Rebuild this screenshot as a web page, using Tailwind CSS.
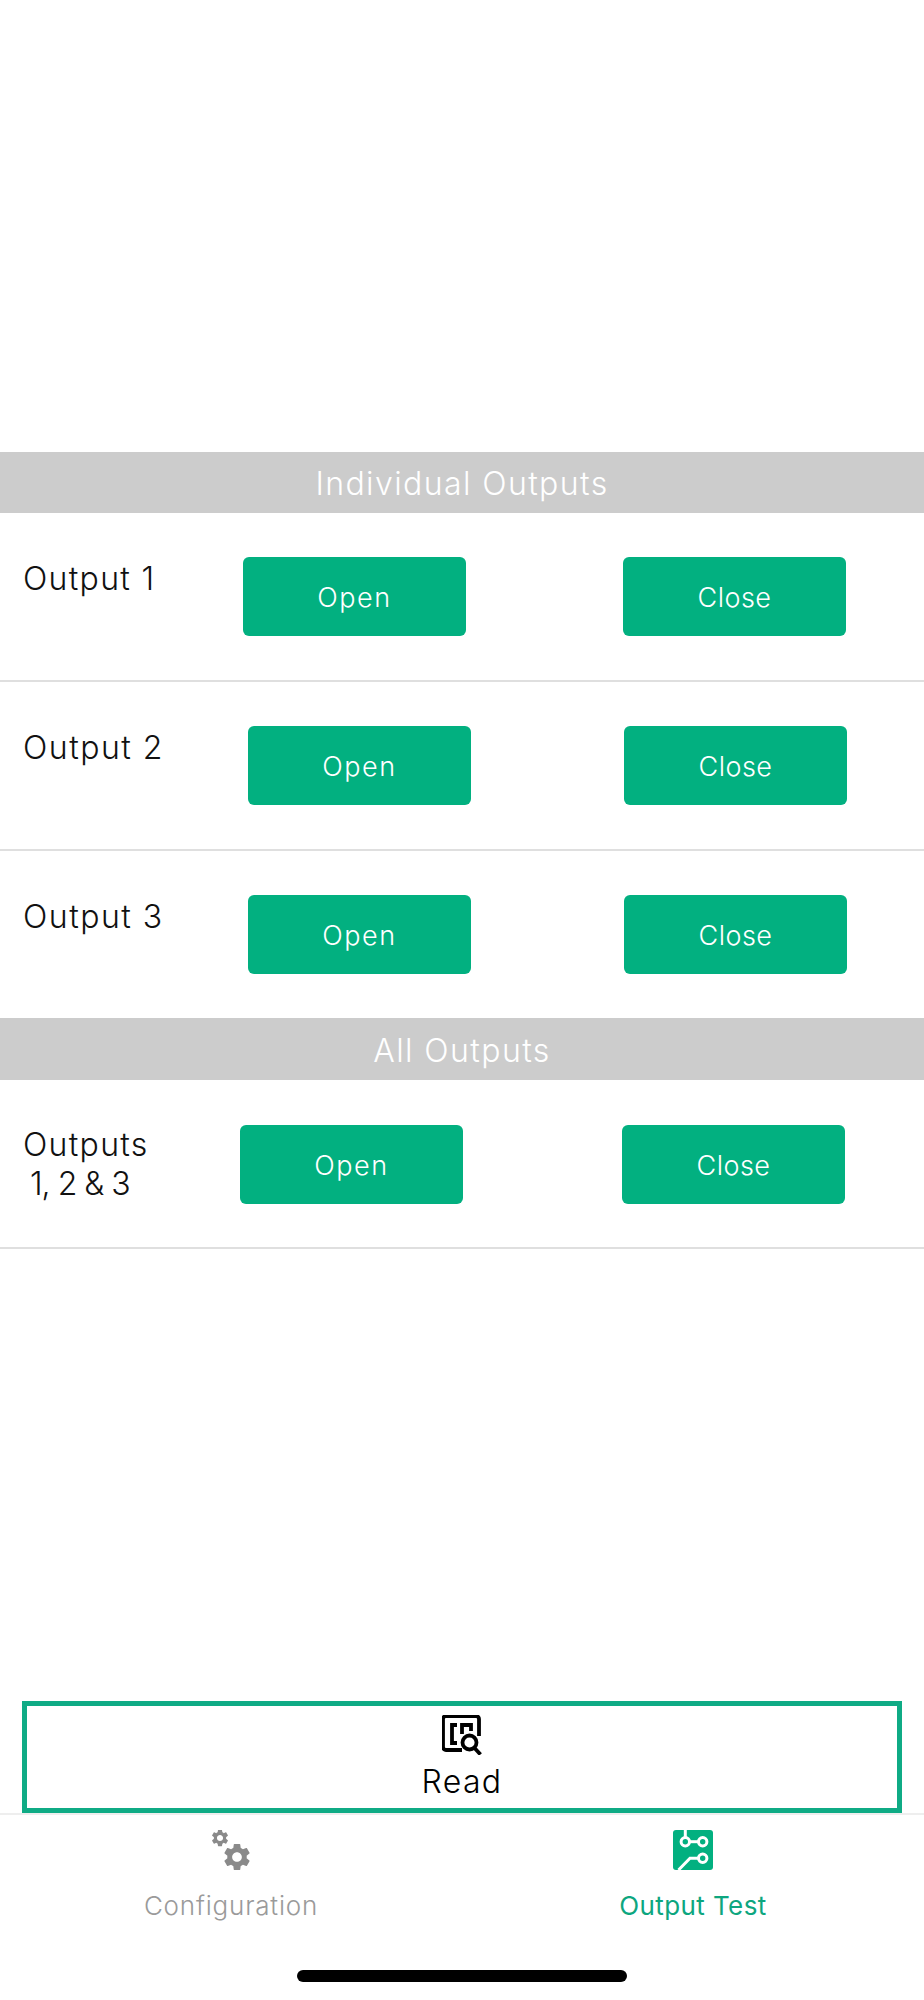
<!DOCTYPE html>
<html lang="en">
<head>
    <meta charset="UTF-8">
    <meta name="viewport" content="width=device-width, initial-scale=1.0">
    <title>Output Test</title>
    <script src="https://cdn.jsdelivr.net/npm/@tailwindcss/browser@4"></script>
</head>
<body class="bg-white">
<div class="flex flex-col w-[924px] h-[2000px] font-['Inter',sans-serif] font-light text-[#111]">
    <div class="h-[452px]"></div>

    <!-- Individual outputs -->
    <div class="h-[61px] pt-[2px] flex items-center justify-center bg-[#cccccc] text-white text-[32px] tracking-[1.4px]">Individual Outputs</div>

    <div class="h-[169px] pt-[44px] pl-[23px] flex items-start border-b-2 border-[#dfdfdf]">
        <div class="w-[220px] mt-[2px] text-[32px] leading-[40px] tracking-[1.3px]">Output 1</div>
        <button class="w-[223px] h-[79px] pt-[3px] rounded-[6px] bg-[#02b080] text-white text-[27px] tracking-[1.500px]">Open</button>
        <button class="w-[223px] h-[79px] pt-[3px] ml-[157px] rounded-[6px] bg-[#02b080] text-white text-[27px] tracking-[0.500px]">Close</button>
    </div>
    <div class="h-[169px] pt-[44px] pl-[23px] flex items-start border-b-2 border-[#dfdfdf]">
        <div class="w-[225px] mt-[2px] text-[32px] leading-[40px] tracking-[1.500px]">Output 2</div>
        <button class="w-[223px] h-[79px] pt-[3px] rounded-[6px] bg-[#02b080] text-white text-[27px] tracking-[1.500px]">Open</button>
        <button class="w-[223px] h-[79px] pt-[3px] ml-[153px] rounded-[6px] bg-[#02b080] text-white text-[27px] tracking-[0.500px]">Close</button>
    </div>
    <div class="h-[167px] pt-[44px] pl-[23px] flex items-start">
        <div class="w-[225px] mt-[2px] text-[32px] leading-[40px] tracking-[1.500px]">Output 3</div>
        <button class="w-[223px] h-[79px] pt-[3px] rounded-[6px] bg-[#02b080] text-white text-[27px] tracking-[1.500px]">Open</button>
        <button class="w-[223px] h-[79px] pt-[3px] ml-[153px] rounded-[6px] bg-[#02b080] text-white text-[27px] tracking-[0.500px]">Close</button>
    </div>

    <!-- All outputs -->
    <div class="h-[62px] pt-[3px] flex items-center justify-center bg-[#cccccc] text-white text-[32px] tracking-[1.4px]">All Outputs</div>

    <div class="h-[169px] pt-[45px] pl-[23px] flex items-start border-b-2 border-[#dfdfdf]">
        <div class="w-[217px] text-[32px] leading-[39px] tracking-[1.3px]">Outputs<span class="block pl-[7px] tracking-[-1px]">1, 2 &amp; 3</span></div>
        <button class="w-[223px] h-[79px] pt-[3px] rounded-[6px] bg-[#02b080] text-white text-[27px] tracking-[1.500px]">Open</button>
        <button class="w-[223px] h-[79px] pt-[3px] ml-[159px] rounded-[6px] bg-[#02b080] text-white text-[27px] tracking-[0.500px]">Close</button>
    </div>

    <div class="flex-1"></div>

    <!-- Read button -->
    <button class="mx-[22px] h-[112px] pt-[9px] flex flex-col items-center justify-start border-[5px] border-[#0fab85] bg-white">
        <svg class="w-[40px] h-[40px]" viewBox="0 0 40 40" fill="none" stroke="#000" stroke-width="3.800">
            <path d="M20 35H4a3 3 0 0 1-3-3V4a3 3 0 0 1 3-3h30a3 3 0 0 1 3 3v17"/>
            <path d="M15 10h-5v18h5"/>
            <path d="M20 19v-9h9v6"/>
            <circle cx="27.500" cy="27.500" r="7"/>
            <path d="M32.500 33l6 6.500"/>
        </svg>
        <span class="mt-[9px] text-[32px] leading-[36px] tracking-[1.3px] text-black">Read</span>
    </button>

    <!-- Tab bar -->
    <div class="h-[187px] flex flex-col border-t-2 border-[#eeeeee]">
        <div class="flex pt-[15px]">
            <div class="w-[462px] flex flex-col items-center">
                <svg class="w-[40px] h-[40px]" viewBox="0 0 40 40" fill="#8a8a8a">
                    <path transform="translate(-1.200 -2.200) scale(0.85)" d="M19.14 12.94c.04-.3.06-.61.06-.94 0-.32-.02-.64-.07-.94l2.03-1.58c.18-.14.23-.41.12-.61l-1.92-3.32c-.12-.22-.37-.29-.59-.22l-2.39.96c-.5-.38-1.03-.7-1.62-.94l-.36-2.54c-.04-.24-.24-.41-.48-.41h-3.84c-.24 0-.43.17-.47.41l-.36 2.54c-.59.24-1.13.57-1.62.94l-2.39-.96c-.22-.08-.47 0-.59.22L2.74 8.87c-.12.21-.08.47.12.61l2.03 1.58c-.05.3-.09.63-.09.94s.02.64.07.94l-2.03 1.58c-.18.14-.23.41-.12.61l1.92 3.32c.12.22.37.29.59.22l2.39-.96c.5.38 1.03.7 1.62.94l.36 2.54c.05.24.24.41.48.41h3.84c.24 0 .44-.17.47-.41l.36-2.54c.59-.24 1.13-.56 1.62-.94l2.39.96c.22.08.47 0 .59-.22l1.92-3.32c.12-.22.07-.47-.12-.61l-2.01-1.58zM12 15.6c-1.98 0-3.6-1.62-3.6-3.6s1.62-3.6 3.6-3.6 3.6 1.62 3.6 3.6-1.62 3.6-3.6 3.6z"/>
                    <path transform="translate(9.800 10.800) scale(1.35)" d="M19.14 12.94c.04-.3.06-.61.06-.94 0-.32-.02-.64-.07-.94l2.03-1.58c.18-.14.23-.41.12-.61l-1.92-3.32c-.12-.22-.37-.29-.59-.22l-2.39.96c-.5-.38-1.03-.7-1.62-.94l-.36-2.54c-.04-.24-.24-.41-.48-.41h-3.84c-.24 0-.43.17-.47.41l-.36 2.54c-.59.24-1.13.57-1.62.94l-2.39-.96c-.22-.08-.47 0-.59.22L2.74 8.87c-.12.21-.08.47.12.61l2.03 1.58c-.05.3-.09.63-.09.94s.02.64.07.94l-2.03 1.58c-.18.14-.23.41-.12.61l1.92 3.32c.12.22.37.29.59.22l2.39-.96c.5.38 1.03.7 1.62.94l.36 2.54c.05.24.24.41.48.41h3.84c.24 0 .44-.17.47-.41l.36-2.54c.59-.24 1.13-.56 1.62-.94l2.39.96c.22.08.47 0 .59-.22l1.92-3.32c.12-.22.07-.47-.12-.61l-2.01-1.58zM12 15.6c-1.98 0-3.6-1.62-3.6-3.6s1.62-3.6 3.6-3.6 3.6 1.62 3.6 3.6-1.62 3.6-3.6 3.6z"/>
                </svg>
                <span class="mt-[21px] text-[26px] leading-[30px] tracking-[0.8px] text-[#9a9a9a]">Configuration</span>
            </div>
            <div class="w-[462px] flex flex-col items-center">
                <svg class="w-[40px] h-[40px]" viewBox="0 0 40 40">
                    <rect width="40" height="40" rx="3" fill="#02b080"/>
                    <g fill="none" stroke="#fff" stroke-width="3">
                        <path d="M12.300 0v7.500"/>
                        <path d="M16.500 11.700h9"/>
                        <path d="M25.500 28.300H17L5.500 40"/>
                        <circle cx="12.300" cy="11.700" r="4.200"/>
                        <circle cx="29.700" cy="11.700" r="4.200"/>
                        <circle cx="29.700" cy="28.300" r="4.200"/>
                    </g>
                </svg>
                <span class="mt-[21px] text-[26px] leading-[30px] font-normal tracking-[0.4px] text-[#0ea67f]">Output Test</span>
            </div>
        </div>
        <div class="mt-auto mb-[18px] mx-auto w-[330px] h-[12px] rounded-full bg-black"></div>
    </div>
</div>
</body>
</html>
